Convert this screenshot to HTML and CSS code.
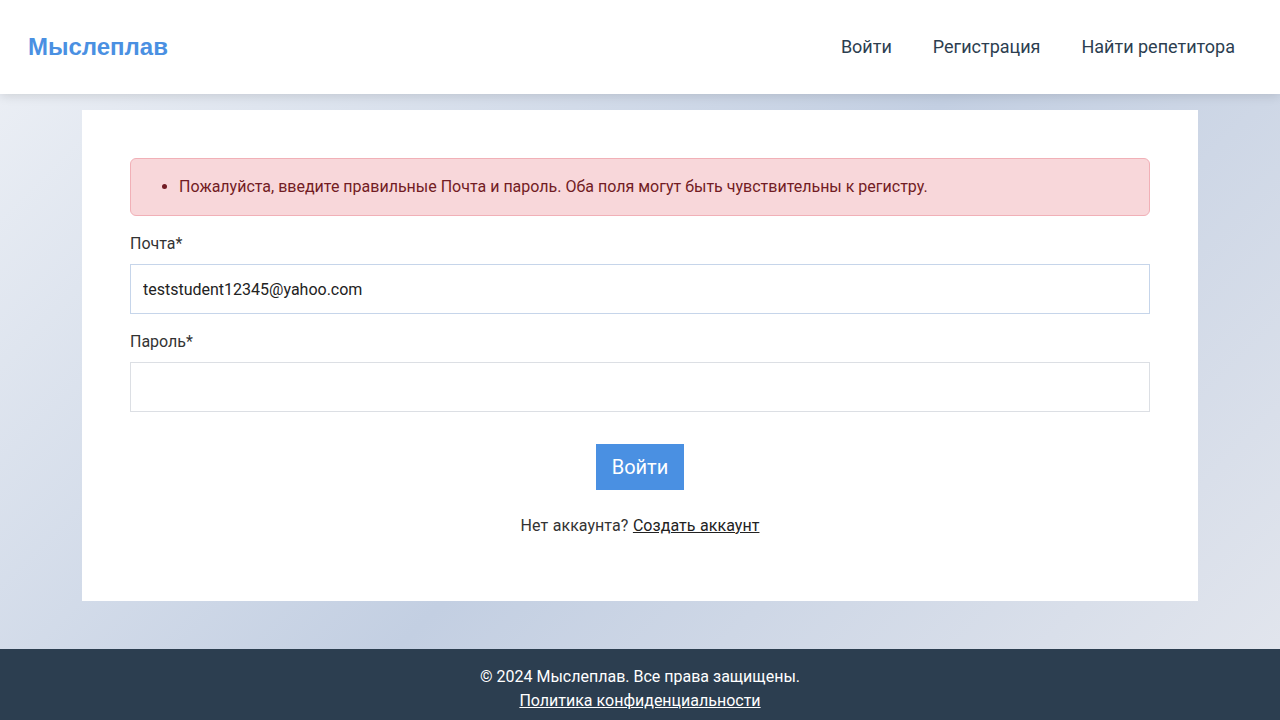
FILE: index.html
```html
<!DOCTYPE html>
<html lang="ru">
<head>
<meta charset="utf-8">
<title>Вход — Мыслеплав</title>
<link rel="stylesheet" href="styles.css">
</head>
<body>
<header class="site-header">
  <a class="logo" href="#">Мыслеплав</a>
  <nav class="nav">
    <a href="#">Войти</a>
    <a href="#">Регистрация</a>
    <a href="#">Найти репетитора</a>
  </nav>
</header>
<main class="main">
  <section class="card">
    <div class="alert">
      <ul>
        <li>Пожалуйста, введите правильные Почта и пароль. Оба поля могут быть чувствительны к регистру.</li>
      </ul>
    </div>
    <form class="form">
      <div class="field">
        <label for="email">Почта*</label>
        <input id="email" class="input input-active" type="text" value="teststudent12345@yahoo.com">
      </div>
      <div class="field">
        <label for="password">Пароль*</label>
        <input id="password" class="input" type="password">
      </div>
      <div class="actions">
        <button type="button" class="btn">Войти</button>
      </div>
    </form>
    <p class="signup">Нет аккаунта? <a href="#">Создать аккаунт</a></p>
  </section>
</main>
<footer class="site-footer">
  <p>© 2024 Мыслеплав. Все права защищены.</p>
  <p><a href="#">Политика конфиденциальности</a></p>
</footer>
</body>
</html>
```

FILE: styles.css
```css
* { box-sizing: border-box; }
html, body { margin: 0; padding: 0; }
body {
  font-family: Roboto, "Noto Sans", Arial, sans-serif;
  font-size: 16px;
  line-height: 24px;
  color: #333;
  background: linear-gradient(135deg, #eef1f6 0%, #c3cfe2 52%, #e4e7ee 100%);
  min-height: 720px;
}
.site-header {
  height: 94px;
  background: #fff;
  display: flex;
  align-items: center;
  justify-content: space-between;
  padding: 0 45px 0 28px;
  box-shadow: 0 2px 10px rgba(0, 0, 0, 0.12);
  position: relative;
}
.logo {
  font-family: "Liberation Sans", Arial, sans-serif;
  font-weight: 700;
  font-size: 24px;
  color: #4a90e2;
  text-decoration: none;
}
.nav { display: flex; gap: 41px; }
.nav a {
  color: #2c3e50;
  text-decoration: none;
  font-size: 18px;
}
.main { padding: 16px 82px 48px; }
.card {
  background: #fff;
  padding: 48px;
}
.alert {
  background: #f8d7da;
  border: 1px solid #f1b0b7;
  border-radius: 6px;
  color: #721c24;
  padding: 16px;
}
.alert ul { margin: 0; padding-left: 32px; line-height: 24px; }
.form { margin-top: 16px; }
.field { margin-bottom: 16px; }
.field label { display: block; margin-bottom: 8px; color: #333; }
.input {
  display: block;
  width: 100%;
  height: 50px;
  border: 1px solid #dcdfe4;
  padding: 0 12px;
  font-family: inherit;
  font-size: 16px;
  color: #222;
  background: #fff;
  outline: none;
}
.input-active { border-color: #c6d5ea; }
.actions { display: flex; justify-content: center; padding-top: 16px; }
.btn {
  background: #4a90e2;
  color: #fff;
  border: none;
  font-family: inherit;
  font-size: 20px;
  line-height: 26px;
  padding: 10px 16px;
  cursor: pointer;
}
.signup {
  text-align: center;
  margin: 24px 0 15px;
  color: #333;
  word-spacing: 0.5px;
  letter-spacing: 0.05px;
}
.signup a { color: #222; text-decoration: underline; }
.site-footer {
  background: #2c3e50;
  color: #fff;
  text-align: center;
  padding: 16px 16px 17px;
}
.site-footer p { margin: 0; line-height: 23.5px; }
.site-footer a { color: #fff; text-decoration: underline; }
```
